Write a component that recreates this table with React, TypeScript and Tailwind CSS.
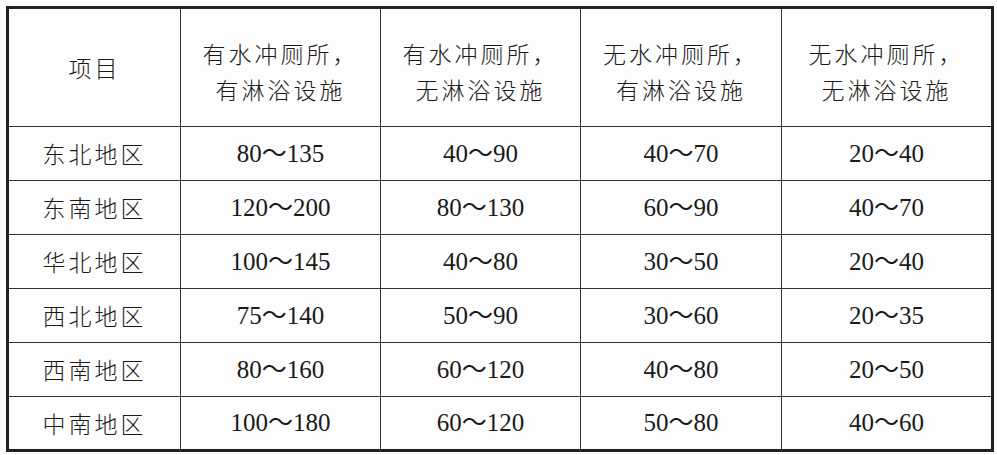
const headers = [
  ["有水冲厕所，", "有淋浴设施"],
  ["有水冲厕所，", "无淋浴设施"],
  ["无水冲厕所，", "有淋浴设施"],
  ["无水冲厕所，", "无淋浴设施"],
];

const rows: [string, string[]][] = [
  ["东北地区", ["80～135", "40～90", "40～70", "20～40"]],
  ["东南地区", ["120～200", "80～130", "60～90", "40～70"]],
  ["华北地区", ["100～145", "40～80", "30～50", "20～40"]],
  ["西北地区", ["75～140", "50～90", "30～60", "20～35"]],
  ["西南地区", ["80～160", "60～120", "40～80", "20～50"]],
  ["中南地区", ["100～180", "60～120", "50～80", "40～60"]],
];

const colWidths = ["w-[173px]", "w-[200px]", "w-[200px]", "w-[201px]", "w-[211px]"];

const cjk = "font-['Noto_Sans_CJK_SC',sans-serif] text-[23px] tracking-[3px] font-light";
const num = "font-['Liberation_Serif','Noto_Sans_CJK_SC',serif] text-[25px]";

export default function App() {
  return (
    <div className="w-[997px] h-[455px] bg-[#fdfdfd] pt-[6px] pl-[6px] text-[#1a1a1a]">
      <table className="table-fixed border-collapse border-[3px] border-[#222] w-[987px]">
        <colgroup>
          {colWidths.map((w, i) => (
            <col key={i} className={w} />
          ))}
        </colgroup>
        <thead>
          <tr className="h-[119px]">
            <th className={`border border-[#333] text-center ${cjk}`}>项目</th>
            {headers.map((h, i) => (
              <th key={i} className={`border border-[#333] text-center leading-[36px] pt-[6px] ${cjk}`}>
                <div>{h[0]}</div>
                <div>{h[1]}</div>
              </th>
            ))}
          </tr>
        </thead>
        <tbody>
          {rows.map(([region, vals]) => (
            <tr key={region} className="h-[54px]">
              <td className={`border border-[#333] text-center ${cjk}`}>{region}</td>
              {vals.map((v, i) => (
                <td key={i} className={`border border-[#333] text-center ${num}`}>
                  {v}
                </td>
              ))}
            </tr>
          ))}
        </tbody>
      </table>
    </div>
  );
}
